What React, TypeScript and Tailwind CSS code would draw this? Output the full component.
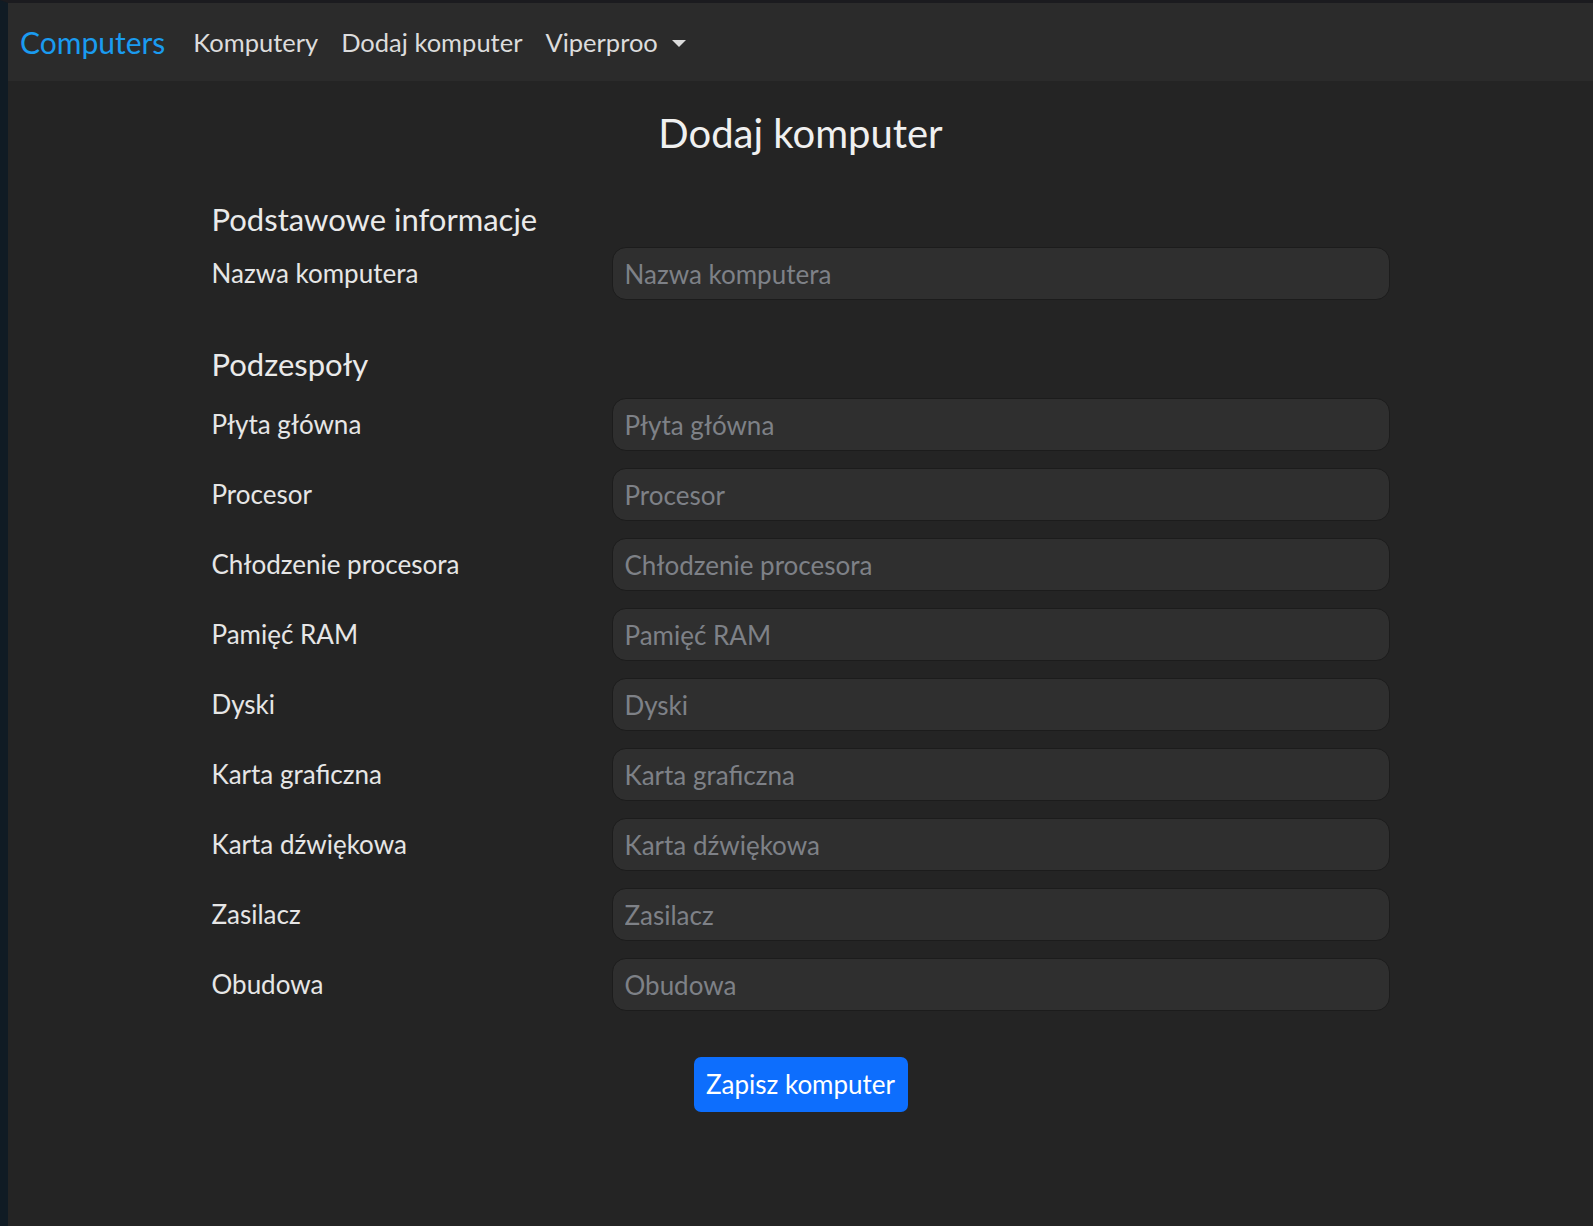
import { useState } from 'react';

const PARTS = [
  'Płyta główna',
  'Procesor',
  'Chłodzenie procesora',
  'Pamięć RAM',
  'Dyski',
  'Karta graficzna',
  'Karta dźwiękowa',
  'Zasilacz',
  'Obudowa',
];

function Field({ label }: { label: string }) {
  const [value, setValue] = useState('');
  return (
    <div className="grid grid-cols-[400px_1fr] items-center">
      <label className="text-[26px] text-[#e6e6e6]">{label}</label>
      <input
        value={value}
        onChange={(e) => setValue(e.target.value)}
        placeholder={label}
        className="h-[53px] w-full rounded-[14px] border border-[#1c1c1c] bg-[#2f2f2f] px-[12px] text-[26px] text-[#e6e6e6] placeholder:text-[#7e8187] outline-none"
      />
    </div>
  );
}

export default function App() {
  return (
    <div
      className="flex min-h-[1226px] flex-col border-l-[8px] border-t-[3px] border-l-[#101b24] border-t-[#1b1b1f] bg-[#242424]"
      style={{ fontFamily: 'Lato, "Noto Sans", sans-serif' }}
    >
      <nav className="flex h-[78px] items-center bg-[#2b2b2b] px-[12px]">
        <a className="mr-[28px] text-[30px] text-[#1a9bf0]">Computers</a>
        <a className="mr-[23px] text-[25.5px] text-[#dcdcdc]">Komputery</a>
        <a className="mr-[23px] text-[25.5px] text-[#dcdcdc]">Dodaj komputer</a>
        <a className="flex items-center text-[25.5px] text-[#dcdcdc]">
          Viperproo
          <span className="ml-[14px] mt-[2px] h-0 w-0 border-x-[7px] border-t-[7px] border-x-transparent border-t-[#dcdcdc]" />
        </a>
      </nav>

      <main className="mx-auto w-[1178px]">
        <h1 className="mt-[28px] text-center text-[40px] leading-[1.2] text-[#f0f0f0]">Dodaj komputer</h1>

        <h5 className="mt-[44px] text-[31px] leading-[1.2] text-[#eaeaea]">Podstawowe informacje</h5>
        <div className="mt-[9px]">
          <Field label="Nazwa komputera" />
        </div>

        <h5 className="mt-[46px] text-[31px] leading-[1.2] text-[#eaeaea]">Podzespoły</h5>
        <div className="mt-[15px] flex flex-col gap-[17px]">
          {PARTS.map((p) => (
            <Field key={p} label={p} />
          ))}
        </div>

        <div className="mt-[46px] flex justify-center">
          <button className="h-[55px] w-[214px] rounded-[7px] bg-[#0d6efd] text-[26px] text-white">
            Zapisz komputer
          </button>
        </div>
      </main>
    </div>
  );
}
